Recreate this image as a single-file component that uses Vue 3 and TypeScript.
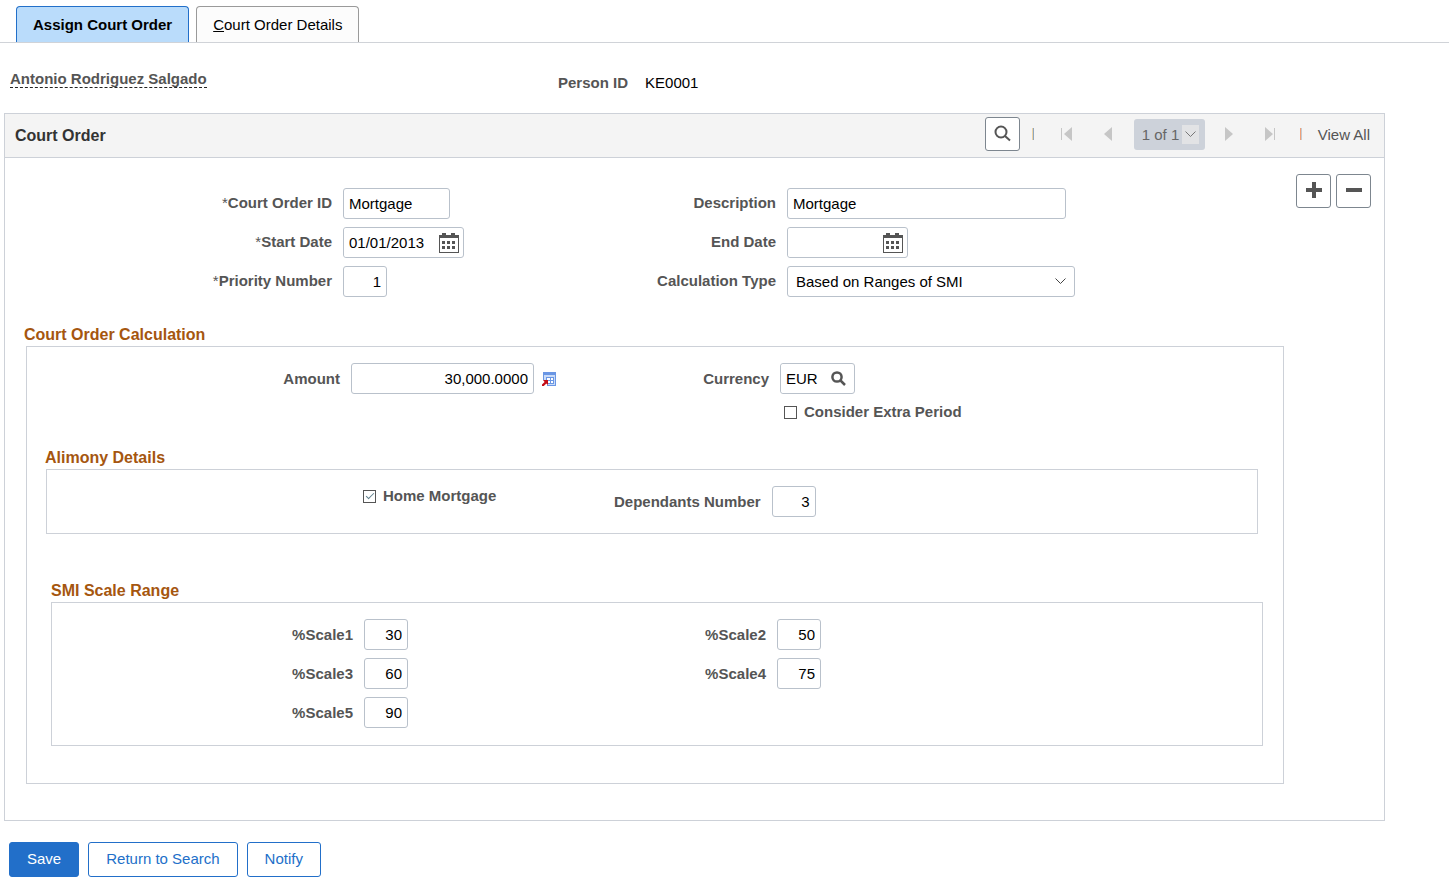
<script setup lang="ts">
import { ref } from 'vue'

interface ScaleField {
  id: string
  label: string
  value: string
}

const courtOrderId = ref('Mortgage')
const description = ref('Mortgage')
const startDate = ref('01/01/2013')
const endDate = ref('')
const priority = ref('1')
const calculationType = ref('smi')
const amount = ref('30,000.0000')
const currency = ref('EUR')
const extraPeriod = ref(false)
const homeMortgage = ref(true)
const dependants = ref('3')
const page = ref('1')

const scales = ref<ScaleField[]>([
  { id: 'scale1', label: '%Scale1', value: '30' },
  { id: 'scale2', label: '%Scale2', value: '50' },
  { id: 'scale3', label: '%Scale3', value: '60' },
  { id: 'scale4', label: '%Scale4', value: '75' },
  { id: 'scale5', label: '%Scale5', value: '90' },
])
</script>

<template>
  <div class="page">
    <nav class="tabs" role="tablist">
      <button class="tab active" type="button" role="tab" aria-selected="true">Assign Court Order</button>
      <button class="tab" type="button" role="tab" aria-selected="false"><u>C</u>ourt Order Details</button>
    </nav>

    <header class="person">
      <div class="person-name"><span>Antonio Rodriguez Salgado</span></div>
      <div class="person-id"><b>Person ID</b><span>KE0001</span></div>
    </header>

    <main class="panel">
      <div class="panel-head">
        <h1>Court Order</h1>
        <div class="pager">
          <button class="square search" type="button" aria-label="Find">
            <svg width="17" height="17" viewBox="0 0 17 17" fill="none" stroke="#555" stroke-width="2">
              <circle cx="7" cy="7" r="5.5" />
              <path d="M11 11l5 4.500" />
            </svg>
          </button>
          <i class="sep muted"></i>
          <button class="nav" type="button" aria-label="First row" disabled>
            <svg width="12" height="14" viewBox="0 0 12 14" fill="#c6c6c6"><path d="M0 1h1v12H0zM11 0v14L3 7z" /></svg>
          </button>
          <button class="nav" type="button" aria-label="Previous row" disabled>
            <svg width="8" height="14" viewBox="0 0 8 14" fill="#c6c6c6"><path d="M8 0v14L0 7z" /></svg>
          </button>
          <div class="row-select">
            <select v-model="page" aria-label="Row" disabled>
              <option value="1">1 of 1</option>
            </select>
            <span class="arrow-box">
              <svg width="11" height="7" viewBox="0 0 11 7" fill="none" stroke="#777"><path d="M.5 .5l5 5 5-5" /></svg>
            </span>
          </div>
          <button class="nav" type="button" aria-label="Next row" disabled>
            <svg width="8" height="14" viewBox="0 0 8 14" fill="#c6c6c6"><path d="M0 0v14l8-7z" /></svg>
          </button>
          <button class="nav" type="button" aria-label="Last row" disabled>
            <svg width="12" height="14" viewBox="0 0 12 14" fill="#c6c6c6"><path d="M10 1h1v12h-1zM1 0v14l8-7z" /></svg>
          </button>
          <i class="sep"></i>
          <button class="view-all" type="button">View All</button>
        </div>
      </div>

      <div class="order">
        <div class="grid order-grid">
          <label for="order-id"><span class="req">*</span>Court Order ID</label>
          <input id="order-id" v-model="courtOrderId" class="w-id" type="text" />
          <label for="description">Description</label>
          <input id="description" v-model="description" class="w-description" type="text" />

          <label for="start"><span class="req">*</span>Start Date</label>
          <div class="combo w-date">
            <input id="start" v-model="startDate" type="text" />
            <button type="button" aria-label="Choose start date">
              <svg width="20" height="20" viewBox="0 0 20 20" fill="#555">
                <path d="M0 2h3V0h4v2h5V0h4v2h4v18H0zM1 5v14h18V5z" fill-rule="evenodd" />
                <path d="M3 8h3v3H3zM8 8h3v3H8zM13 8h3v3h-3zM3 13h3v3H3zM8 13h3v3H8zM13 13h3v3h-3z" />
              </svg>
            </button>
          </div>
          <label for="end">End Date</label>
          <div class="combo w-date">
            <input id="end" v-model="endDate" type="text" />
            <button type="button" aria-label="Choose end date">
              <svg width="20" height="20" viewBox="0 0 20 20" fill="#555">
                <path d="M0 2h3V0h4v2h5V0h4v2h4v18H0zM1 5v14h18V5z" fill-rule="evenodd" />
                <path d="M3 8h3v3H3zM8 8h3v3H8zM13 8h3v3h-3zM3 13h3v3H3zM8 13h3v3H8zM13 13h3v3h-3z" />
              </svg>
            </button>
          </div>

          <label for="priority"><span class="req">*</span>Priority Number</label>
          <input id="priority" v-model="priority" class="w-number" type="text" />
          <label for="calc-type">Calculation Type</label>
          <div class="drop">
            <select id="calc-type" v-model="calculationType">
              <option value="smi">Based on Ranges of SMI</option>
            </select>
            <svg width="11" height="7" viewBox="0 0 11 7" fill="none" stroke="#444"><path d="M.5 .5l5 5 5-5" /></svg>
          </div>
        </div>
        <div class="row-actions">
          <button class="square" type="button" aria-label="Add row">
            <svg width="16" height="16" viewBox="0 0 16 16" fill="#555"><path d="M6 0h4v6h6v4h-6v6H6v-6H0V6h6z" /></svg>
          </button>
          <button class="square" type="button" aria-label="Delete row">
            <svg width="16" height="16" viewBox="0 0 16 16" fill="#555"><path d="M0 6h16v4H0z" /></svg>
          </button>
        </div>
      </div>

      <section class="calculation">
        <h2>Court Order Calculation</h2>
        <div class="box calculation-box">
          <div class="grid amount-grid">
            <label for="amount">Amount</label>
            <div class="amount">
              <input id="amount" v-model="amount" class="w-amount" type="text" />
              <button class="plain" type="button" aria-label="Currency details">
                <svg width="14" height="14" viewBox="0 0 14 14">
                  <path d="M1 0h13v14H1z" fill="#6a96e4" />
                  <path d="M2 3h11v10H2z" fill="#c9dbf8" />
                  <path d="M4 5h8v7H4z" fill="#6a96e4" />
                  <path d="M5 6h3v2H5zM9 6h2v2H9zM5 9h3v2H5zM9 9h2v2H9z" fill="#fff" />
                  <path d="M0 8h5v6H0z" fill="#fff" />
                  <path d="M1 8h5v5L4.300 11.500 1.800 14H0v-1.500L2.600 10z" fill="#c40d16" />
                </svg>
              </button>
            </div>
            <label for="currency">Currency</label>
            <div class="combo w-currency">
              <input id="currency" v-model="currency" type="text" />
              <button type="button" aria-label="Look up currency">
                <svg width="15" height="15" viewBox="0 0 15 15" fill="none" stroke="#555" stroke-width="2.500">
                  <circle cx="6" cy="6" r="4.600" />
                  <path d="M9.500 9.500l4.500 4.500" />
                </svg>
              </button>
            </div>
            <label class="check extra"><input v-model="extraPeriod" type="checkbox" />Consider Extra Period</label>
          </div>

          <section class="alimony">
            <h2>Alimony Details</h2>
            <div class="box alimony-box">
              <label class="check"><input v-model="homeMortgage" type="checkbox" />Home Mortgage</label>
              <label for="dependants">Dependants Number</label>
              <input id="dependants" v-model="dependants" class="w-number" type="text" />
            </div>
          </section>

          <section class="smi">
            <h2>SMI Scale Range</h2>
            <div class="box grid smi-grid">
              <template v-for="scale in scales" :key="scale.id">
                <label :for="scale.id">{{ scale.label }}</label>
                <input :id="scale.id" v-model="scale.value" class="w-number" type="text" />
              </template>
            </div>
          </section>
        </div>
      </section>
    </main>

    <footer class="actions">
      <button class="action primary" type="button">Save</button>
      <button class="action" type="button">Return to Search</button>
      <button class="action" type="button">Notify</button>
    </footer>
  </div>
</template>

<style>
body {
  margin: 0;
  background: #fff;
}
</style>

<style scoped>
.page,
.page button,
.page input,
.page select {
  font-family: "Liberation Sans", Arial, sans-serif;
  font-size: 15px;
}
.page {
  color: #000;
  line-height: 20px;
}
.page *,
.page *::before {
  box-sizing: border-box;
}
button {
  margin: 0;
  padding: 0;
  color: inherit;
  background: none;
  border: 0;
}
svg {
  display: block;
}

.tabs {
  display: flex;
  gap: 7px;
  padding: 6px 16px 0;
  border-bottom: 1px solid #d0d3d8;
}
.tab {
  height: 36px;
  padding: 0 16px;
  background: #fcfcfc;
  border: 1px solid #9a9a9a;
  border-bottom: 0;
  border-radius: 4px 4px 0 0;
}
.tab.active {
  font-weight: bold;
  background: #badcfb;
  border-color: #226fc9;
}

.person {
  display: flex;
  align-items: flex-start;
  padding: 28px 10px 0;
  height: 70px;
}
.person-name {
  width: 548px;
  line-height: 16px;
  font-weight: bold;
  color: #555;
}
.person-name span {
  display: inline-block;
  border-bottom: 1px dashed #222;
}
.person-id {
  display: flex;
  gap: 17px;
  padding-top: 2px;
}
.person-id b {
  color: #555;
}

.panel {
  margin: 0 64px 0 4px;
  padding-bottom: 36px;
  border: 1px solid #cdd1d8;
}
.panel-head {
  display: flex;
  align-items: center;
  justify-content: space-between;
  height: 44px;
  padding: 0 14px 0 10px;
  background: #f4f4f4;
  border-bottom: 1px solid #cdd1d8;
}
h1 {
  margin: 0;
  font-size: 16px;
  color: #333;
}
h2 {
  margin: 0;
  padding-top: 2px;
  font-size: 16px;
  line-height: 22px;
  color: #a5560f;
}
.pager {
  display: flex;
  align-items: center;
  padding-bottom: 3px;
  color: #555;
}
.square {
  display: grid;
  place-items: center;
  width: 35px;
  height: 34px;
  padding-bottom: 2px;
  background: #fff;
  border: 1px solid #7d868f;
  border-radius: 3px;
}
.sep {
  width: 2px;
  height: 12px;
  margin: 0 9px;
  border-left: 1px solid #f0a078;
  border-right: 1px solid #c5cbd2;
}
.sep.muted {
  margin: 0 13px 0 12px;
  border-left-color: #efd3a4;
  border-right-color: #8ea6bd;
}
.nav {
  display: grid;
  place-items: center;
  width: 41px;
  height: 30px;
}
.row-select {
  display: grid;
  align-items: center;
  width: 71px;
  height: 31px;
  margin: 0 4px 0 5px;
}
.row-select > *,
.drop > * {
  grid-area: 1 / 1;
}
.row-select select {
  width: 100%;
  height: 31px;
  padding: 0 0 0 8px;
  color: #666;
  opacity: 1;
  background: #cdd2da;
  border: 0;
  border-radius: 3px;
  appearance: none;
}
.arrow-box {
  display: grid;
  place-items: center;
  justify-self: end;
  width: 17px;
  height: 19px;
  margin-right: 6px;
  background: #e2e3e5;
  pointer-events: none;
}
.view-all {
  padding-left: 7px;
  color: #555;
}

.order {
  display: flex;
  justify-content: space-between;
  align-items: flex-start;
  padding: 16px 13px 0 0;
}
.row-actions {
  display: flex;
  gap: 5px;
}
.grid {
  display: grid;
  align-items: center;
  gap: 8px 11px;
}
.order-grid {
  grid-template-columns: 327px 121px 301px auto;
  padding-top: 14px;
}
label {
  font-weight: bold;
  text-align: right;
  white-space: nowrap;
  color: #555;
}
.order-grid label {
  padding-bottom: 2px;
}
.req {
  font-weight: normal;
}
input[type="text"],
select {
  min-width: 0;
  height: 31px;
  padding: 0 5px;
  color: #000;
  background: #fff;
  border: 1px solid #b9c1cb;
  border-radius: 3px;
  outline: 0;
}
.combo {
  display: flex;
  align-items: center;
  height: 31px;
  border: 1px solid #b9c1cb;
  border-radius: 3px;
}
.combo input[type="text"] {
  flex: 1;
  width: 0;
  height: 29px;
  padding-right: 0;
  border: 0;
}
.combo button {
  padding-right: 4px;
}
.w-id {
  width: 107px;
}
.w-description {
  width: 279px;
}
.w-date {
  width: 121px;
}
.w-currency {
  width: 75px;
}
.w-currency button {
  padding-right: 8px;
}
.page .w-number {
  width: 44px;
  text-align: right;
}
.page .w-amount {
  width: 183px;
  text-align: right;
}
.drop {
  display: grid;
  align-items: center;
  width: 288px;
}
.drop select {
  padding: 0 28px 0 8px;
  appearance: none;
}
.drop svg {
  justify-self: end;
  margin-right: 9px;
  pointer-events: none;
}

.calculation {
  margin: 25px 100px 0 21px;
}
.calculation > h2 {
  margin-left: -2px;
}
.box {
  border: 1px solid #cdd1d8;
}
.calculation-box {
  padding: 16px 0 37px;
}
.amount-grid {
  grid-template-columns: 313px 205px 202px auto;
}
.amount {
  display: flex;
  align-items: center;
  gap: 8px;
}
.check {
  display: flex;
  align-items: center;
  gap: 7px;
}
.check input {
  display: grid;
  place-items: center;
  width: 13px;
  height: 13px;
  margin: 0;
  background: #fff;
  border: 1px solid #555;
  appearance: none;
}
.check input:checked::before {
  content: "";
  width: 8px;
  height: 4px;
  margin-bottom: 3px;
  border: solid #5f7f8c;
  border-width: 0 0 1px 1px;
  transform: rotate(-45deg);
}
.extra {
  grid-column: 4;
  padding-left: 4px;
}
.alimony {
  margin: 23px 25px 0 19px;
}
.alimony > h2 {
  margin-left: -1px;
}
.alimony-box {
  display: flex;
  align-items: center;
  gap: 11px;
  padding: 16px 0 16px 316px;
}
.alimony-box .check {
  align-self: flex-start;
  width: 240px;
}
.smi {
  margin: 44px 20px 0 24px;
}
.smi-grid {
  grid-template-columns: 301px 44px 347px auto;
  padding: 16px 0 17px;
}

.actions {
  display: flex;
  gap: 9px;
  padding: 21px 9px 0;
}
.action {
  height: 35px;
  padding: 0 17px 2px;
  color: #226fc9;
  background: #fff;
  border: 1px solid #226fc9;
  border-radius: 3px;
}
.action.primary {
  color: #fff;
  background: #226fc9;
}
</style>
